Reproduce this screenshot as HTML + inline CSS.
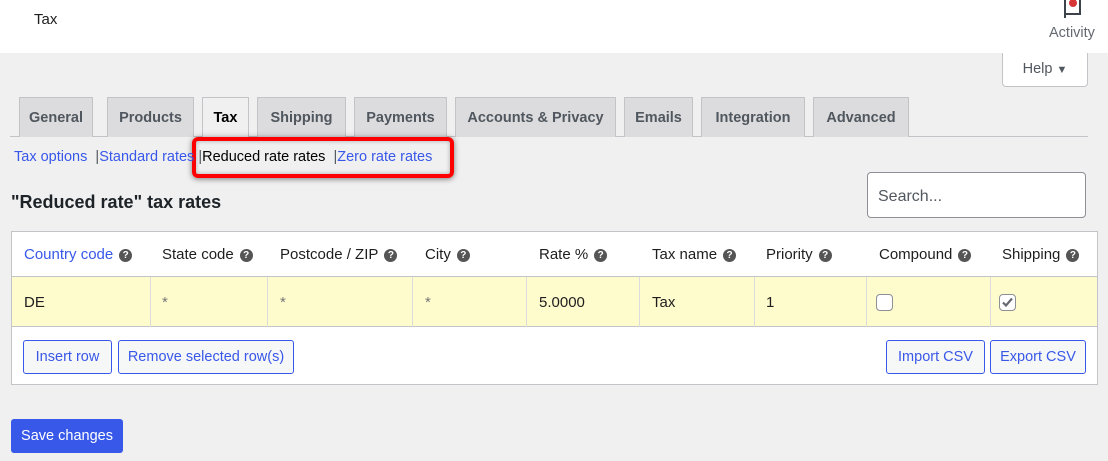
<!DOCTYPE html>
<html><head><meta charset="utf-8"><style>
*{box-sizing:border-box;margin:0;padding:0}
body{width:1108px;height:461px;background:#f0f0f1;font-family:"Liberation Sans",sans-serif;position:relative;overflow:hidden;color:#1e1e1e}
.a{position:absolute;white-space:nowrap}
.hdr{left:0;top:0;width:1108px;height:53px;background:#fff}
.tab{position:absolute;top:97px;height:40px;background:#dcdcde;border:1px solid #c3c4c7;border-bottom:none;font-size:14.5px;font-weight:bold;color:#50575e;text-align:center;line-height:40px}
.tab.act{background:#f0f0f1;color:#000;height:41px}
.lnk{color:#3858e9}
.q{display:inline-block;width:13px;height:13px;border-radius:50%;background:#555;color:#fff;font-size:10px;font-weight:bold;text-align:center;line-height:13px;vertical-align:1px;margin-left:6px}
.th{top:246px;font-size:15px;color:#1e1e1e}
.th.lnk{color:#3858e9}
.td{top:294px;font-size:15px}
.vl{position:absolute;top:277px;width:1px;height:50px;background:#dcdcde}
.btn{position:absolute;top:340px;height:34px;border:1px solid #3858e9;border-radius:3px;background:#f6f7f7;color:#3858e9;font-size:14.5px;text-align:center;line-height:32px}
</style></head><body>
<div class="a hdr"></div>
<div class="a" style="left:34px;top:11px;font-size:15px;color:#1e1e1e">Tax</div>
<svg class="a" style="left:1062px;top:0" width="22" height="20" viewBox="0 0 22 20"><path d="M3 0V18M3 14H18V0" stroke="#3c434a" stroke-width="2" fill="none"/><rect x="6" y="0" width="10" height="13" fill="#fff"/><circle cx="11" cy="3" r="4" fill="#d63638"/></svg>
<div class="a" style="left:1049px;top:25px;font-size:14.5px;color:#646970">Activity</div>
<div class="a" style="left:1002px;top:53px;width:86px;height:34px;background:#fff;border:1px solid #c3c4c7;border-top:none;border-radius:0 0 4px 4px;font-size:14.5px;color:#50575e;text-align:center;line-height:32px">Help <span style="font-size:11px">▼</span></div>

<div class="a" style="left:10px;top:136px;width:1078px;height:1px;background:#c3c4c7"></div>
<div class="tab" style="left:19px;width:74px">General</div>
<div class="tab" style="left:107px;width:87px">Products</div>
<div class="tab act" style="left:202px;width:47px">Tax</div>
<div class="tab" style="left:257px;width:89px">Shipping</div>
<div class="tab" style="left:354px;width:93px">Payments</div>
<div class="tab" style="left:455px;width:161px">Accounts &amp; Privacy</div>
<div class="tab" style="left:624px;width:69px">Emails</div>
<div class="tab" style="left:701px;width:104px">Integration</div>
<div class="tab" style="left:813px;width:96px">Advanced</div>

<div class="a" style="left:192px;top:137px;width:262px;height:41px;border:4px solid #f00;border-radius:6px;box-shadow:0 1px 6px rgba(0,0,0,.5), inset 0 0 4px rgba(0,0,0,.3)"></div>
<div class="a" style="left:14px;top:149px;font-size:14.5px;color:#50575e"><span class="lnk">Tax options</span>&nbsp;&nbsp;|<span class="lnk">Standard rates</span>&nbsp;|<span style="color:#000">Reduced rate rates</span>&nbsp;&nbsp;|<span class="lnk">Zero rate rates</span></div>

<div class="a" style="left:11px;top:192px;font-size:18px;font-weight:bold;color:#1d2327">"Reduced rate" tax rates</div>
<div class="a" style="left:867px;top:172px;width:219px;height:46px;background:#fff;border:1px solid #8c8f94;border-radius:4px;font-size:16px;color:#50575e;padding-left:10px;line-height:48px">Search...</div>

<div class="a" style="left:11px;top:231px;width:1087px;height:154px;background:#fff;border:1px solid #c3c4c7"></div>
<div class="a" style="left:12px;top:276px;width:1085px;height:51px;background:#fefbcc;border-top:1px solid #c3c4c7;border-bottom:1px solid #c3c4c7"></div>
<div class="vl" style="left:150px"></div><div class="vl" style="left:267px"></div><div class="vl" style="left:412px"></div><div class="vl" style="left:526px"></div><div class="vl" style="left:639px"></div><div class="vl" style="left:754px"></div><div class="vl" style="left:866px"></div><div class="vl" style="left:990px"></div>

<div class="a th lnk" style="left:24px">Country code<span class="q">?</span></div>
<div class="a th" style="left:162px">State code<span class="q">?</span></div>
<div class="a th" style="left:280px">Postcode / ZIP<span class="q">?</span></div>
<div class="a th" style="left:425px">City<span class="q">?</span></div>
<div class="a th" style="left:539px">Rate %<span class="q">?</span></div>
<div class="a th" style="left:652px">Tax name<span class="q">?</span></div>
<div class="a th" style="left:766px">Priority<span class="q">?</span></div>
<div class="a th" style="left:879px">Compound<span class="q">?</span></div>
<div class="a th" style="left:1002px">Shipping<span class="q">?</span></div>

<div class="a td" style="left:24px">DE</div>
<div class="a td" style="left:162px;color:#777">*</div>
<div class="a td" style="left:280px;color:#777">*</div>
<div class="a td" style="left:425px;color:#777">*</div>
<div class="a td" style="left:539px">5.0000</div>
<div class="a td" style="left:652px">Tax</div>
<div class="a td" style="left:766px">1</div>
<div class="a" style="left:876px;top:294px;width:17px;height:17px;border:1px solid #8c8f94;border-radius:4px;background:#fff"></div>
<div class="a" style="left:999px;top:294px;width:17px;height:17px;border:1px solid #8c8f94;border-radius:4px;background:#fff"><svg width="15" height="15" viewBox="0 0 15 15"><path d="M3 7.5L6 10.5L12 3.5" stroke="#646970" stroke-width="2.2" fill="none"/></svg></div>

<div class="btn" style="left:23px;width:89px">Insert row</div>
<div class="btn" style="left:118px;width:176px">Remove selected row(s)</div>
<div class="btn" style="left:886px;width:99px">Import CSV</div>
<div class="btn" style="left:990px;width:96px">Export CSV</div>

<div class="a" style="left:11px;top:419px;width:112px;height:34px;background:#3858e9;border-radius:3px;color:#fff;font-size:14.5px;text-align:center;line-height:34px">Save changes</div>
</body></html>
